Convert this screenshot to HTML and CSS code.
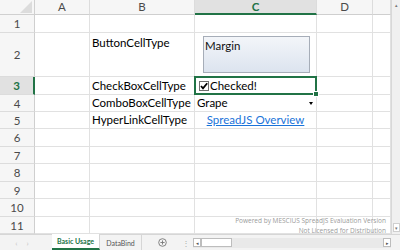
FILE: index.html
```html
<!DOCTYPE html>
<html>
<head>
<meta charset="utf-8">
<link rel="stylesheet" href="styles.css">
</head>
<body>
<div class="spread">
  <div class="main">
    <div class="sheet">
      <div class="corner"><span class="tri"></span></div>
      <div class="ch">A</div>
      <div class="ch">B</div>
      <div class="ch ch-sel">C</div>
      <div class="ch">D</div>
      <div class="ch"></div>

      <div class="rh">1</div><div class="c"></div><div class="c"></div><div class="c"></div><div class="c"></div><div class="c"></div>

      <div class="rh">2</div><div class="c"></div>
      <div class="c top">ButtonCellType</div>
      <div class="c btn-cell"><div class="btn">Margin</div></div>
      <div class="c"></div><div class="c"></div>

      <div class="rh rh-sel">3</div><div class="c"></div>
      <div class="c">CheckBoxCellType</div>
      <div class="c sel"><span class="chk"><svg width="10" height="10" viewBox="0 0 10 10"><rect x="0.5" y="0.5" width="9" height="9" fill="#fff" stroke="#6e6e6e"/><path d="M2 5 L4 7.3 L8.2 2.2" fill="none" stroke="#000" stroke-width="1.8"/></svg></span>Checked!<span class="handle"></span></div>
      <div class="c"></div><div class="c"></div>

      <div class="rh">4</div><div class="c"></div>
      <div class="c">ComboBoxCellType</div>
      <div class="c combo">Grape<span class="arrow"></span></div>
      <div class="c"></div><div class="c"></div>

      <div class="rh">5</div><div class="c"></div>
      <div class="c">HyperLinkCellType</div>
      <div class="c link-cell"><span class="link">SpreadJS Overview</span></div>
      <div class="c"></div><div class="c"></div>

      <div class="rh">6</div><div class="c"></div><div class="c"></div><div class="c"></div><div class="c"></div><div class="c"></div>
      <div class="rh">7</div><div class="c"></div><div class="c"></div><div class="c"></div><div class="c"></div><div class="c"></div>
      <div class="rh">8</div><div class="c"></div><div class="c"></div><div class="c"></div><div class="c"></div><div class="c"></div>
      <div class="rh">9</div><div class="c"></div><div class="c"></div><div class="c"></div><div class="c"></div><div class="c"></div>
      <div class="rh">10</div><div class="c"></div><div class="c"></div><div class="c"></div><div class="c"></div><div class="c"></div>
      <div class="rh">11</div><div class="c"></div><div class="c"></div><div class="c"></div><div class="c"></div><div class="c"></div>

      <div class="watermark">Powered by MESCIUS SpreadJS Evaluation Version<br>Not Licensed for Distribution</div>
    </div>
    <div class="vscroll">
      <div class="vbtn">&#9652;</div>
      <div class="vtrack"></div>
      <div class="vbtn vbtn-down">&#9662;</div>
    </div>
  </div>
  <div class="tabbar">
    <div class="nav"><span>&#8249;</span><span>&#8250;</span></div>
    <div class="tab active">Basic Usage</div>
    <div class="tab">DataBind</div>
    <div class="add">
      <svg width="9" height="9" viewBox="0 0 9 9"><circle cx="4.5" cy="4.5" r="3.8" fill="none" stroke="#777" stroke-width="0.9"/><path d="M4.5 2.4 V6.6 M2.4 4.5 H6.6" stroke="#777" stroke-width="0.9"/></svg>
    </div>
    <div class="splitter">&#8942;</div>
    <div class="hscroll">
      <div class="hbtn">&#9666;</div>
      <div class="thumb"></div>
      <div class="htrack"></div>
      <div class="hbtn">&#9656;</div>
    </div>
  </div>
</div>
</body>
</html>
```
FILE: styles.css
```css
html, body {
  margin: 0;
  padding: 0;
  background: #fff;
}
.spread {
  width: 400px;
  height: 250px;
  display: flex;
  flex-direction: column;
  font-family: Lato, "Liberation Sans", sans-serif;
  overflow: hidden;
}
.main {
  display: flex;
  height: 234px;
}
.sheet {
  position: relative;
  display: grid;
  grid-template-columns: 35px 55px 105px 122px 56px 18px;
  grid-template-rows: 15px 18px 44px 18px 17px 17px 18px 17px 18px 17px 18px 17px;
  width: 391px;
  overflow: hidden;
}
.corner {
  position: relative;
  background: #f6f6f6;
  border-right: 1px solid #d0d0d0;
  border-bottom: 1px solid #d0d0d0;
  box-sizing: border-box;
}
.tri {
  position: absolute;
  right: 2px;
  bottom: 1px;
  width: 0;
  height: 0;
  border-left: 12px solid transparent;
  border-bottom: 12px solid #dcdcdc;
}
.ch {
  background: #f6f6f6;
  border-right: 1px solid #dcdcdc;
  border-bottom: 1px solid #cfcfcf;
  box-sizing: border-box;
  color: #4a4a4a;
  font-size: 11.5px;
  line-height: 14px;
  text-align: center;
}
.ch-sel {
  background: #e1e1e1;
  color: #217346;
  font-weight: bold;
  border-bottom: 2px solid #217346;
}
.rh {
  background: #f6f6f6;
  border-right: 1px solid #cfcfcf;
  border-bottom: 1px solid #dcdcdc;
  box-sizing: border-box;
  color: #4a4a4a;
  font-size: 11.5px;
  text-align: center;
  display: flex;
  align-items: center;
  justify-content: center;
}
.rh-sel {
  background: #e1e1e1;
  color: #217346;
  font-weight: bold;
  border-right: 2px solid #217346;
}
.c {
  border-right: 1px solid #e1e1e1;
  border-bottom: 1px solid #e1e1e1;
  box-sizing: border-box;
  font-size: 11.5px;
  color: #000;
  padding: 0 2px;
  display: flex;
  align-items: flex-end;
  padding-bottom: 2px;
  white-space: nowrap;
  min-width: 0;
}
.c.top {
  align-items: flex-start;
  padding-top: 3px;
}
.btn-cell {
  padding: 3px 6px 3px 8px;
  align-items: stretch;
}
.btn {
  flex: 1;
  border: 1px solid #a6adb8;
  background: linear-gradient(#f3f5f9, #dce4ef);
  font-size: 11.5px;
  padding: 2px 1px;
  color: #111;
}
.sel {
  position: relative;
  overflow: visible;
  align-items: center;
  padding: 0 0 0 4px;
}
.sel::after {
  content: "";
  position: absolute;
  left: -1px;
  top: -1px;
  right: -1px;
  bottom: -1px;
  border: 2px solid #217346;
}
.handle {
  position: absolute;
  right: -3px;
  bottom: -3px;
  width: 4px;
  height: 4px;
  background: #217346;
  border: 1px solid #fff;
  z-index: 2;
}
.chk {
  display: inline-flex;
  margin-right: 1px;
}
.combo {
  position: relative;
  padding-left: 2px;
}
.arrow {
  position: absolute;
  right: 3px;
  top: 7px;
  width: 0;
  height: 0;
  border-left: 2px solid transparent;
  border-right: 2px solid transparent;
  border-top: 3px solid #000;
}
.link-cell {
  justify-content: center;
}
.link {
  color: #1a73d9;
  text-decoration: underline;
}
.watermark {
  position: absolute;
  right: 5px;
  bottom: -2px;
  text-align: right;
  font-size: 6.5px;
  line-height: 10px;
  color: #9a9a9a;
  font-family: "Open Sans", "Liberation Sans", sans-serif;
}
.vscroll {
  width: 9px;
  background: #f0f0f0;
  border-left: 1px solid #d8d8d8;
  box-sizing: border-box;
  display: flex;
  flex-direction: column;
  align-items: center;
}
.vbtn {
  font-size: 5px;
  color: #777;
  height: 9px;
  width: 7px;
  display: flex;
  align-items: center;
  justify-content: center;
}
.vbtn-down {
  border: 1px solid #cfcfcf;
  background: #fff;
  margin-bottom: 2px;
  box-sizing: border-box;
}
.vtrack {
  flex: 1;
}
.tabbar {
  height: 16px;
  background: #f3f3f3;
  border-top: 1px solid #d6d6d6;
  box-sizing: border-box;
  display: flex;
  align-items: stretch;
  font-size: 7px;
  color: #555;
  white-space: nowrap;
}
.nav {
  width: 52px;
  display: flex;
  gap: 9px;
  justify-content: center;
  align-items: center;
  color: #c4c4c4;
  font-size: 8px;
  padding-right: 8px;
  box-sizing: border-box;
}
.tab {
  display: flex;
  align-items: center;
  padding: 0 2px;
  border-right: 1px solid #d6d6d6;
}
.tab.active {
  width: 48px;
  box-sizing: border-box;
  justify-content: center;
  background: #fff;
  color: #217346;
  font-weight: bold;
  border-bottom: 2px solid #217346;
  margin-top: -1px;
}
.tab:not(.active) {
  width: 42px;
  box-sizing: border-box;
  justify-content: center;
}
.add {
  width: 40px;
  display: flex;
  align-items: center;
  justify-content: center;
}
.splitter {
  width: 8px;
  display: flex;
  align-items: center;
  justify-content: center;
  color: #aaa;
  font-size: 8px;
  margin-right: 3px;
}
.hscroll {
  flex: 1;
  display: flex;
  align-items: center;
  margin-right: 9px;
  height: 10px;
  align-self: center;
  background: #e9e9e9;
}
.hbtn {
  width: 8px;
  height: 9px;
  border: 1px solid #bdbdbd;
  background: #fff;
  box-sizing: border-box;
  font-size: 5px;
  color: #555;
  display: flex;
  align-items: center;
  justify-content: center;
}
.thumb {
  width: 31px;
  height: 9px;
  border: 1px solid #bdbdbd;
  background: #fff;
  box-sizing: border-box;
}
.htrack {
  flex: 1;
}
```
